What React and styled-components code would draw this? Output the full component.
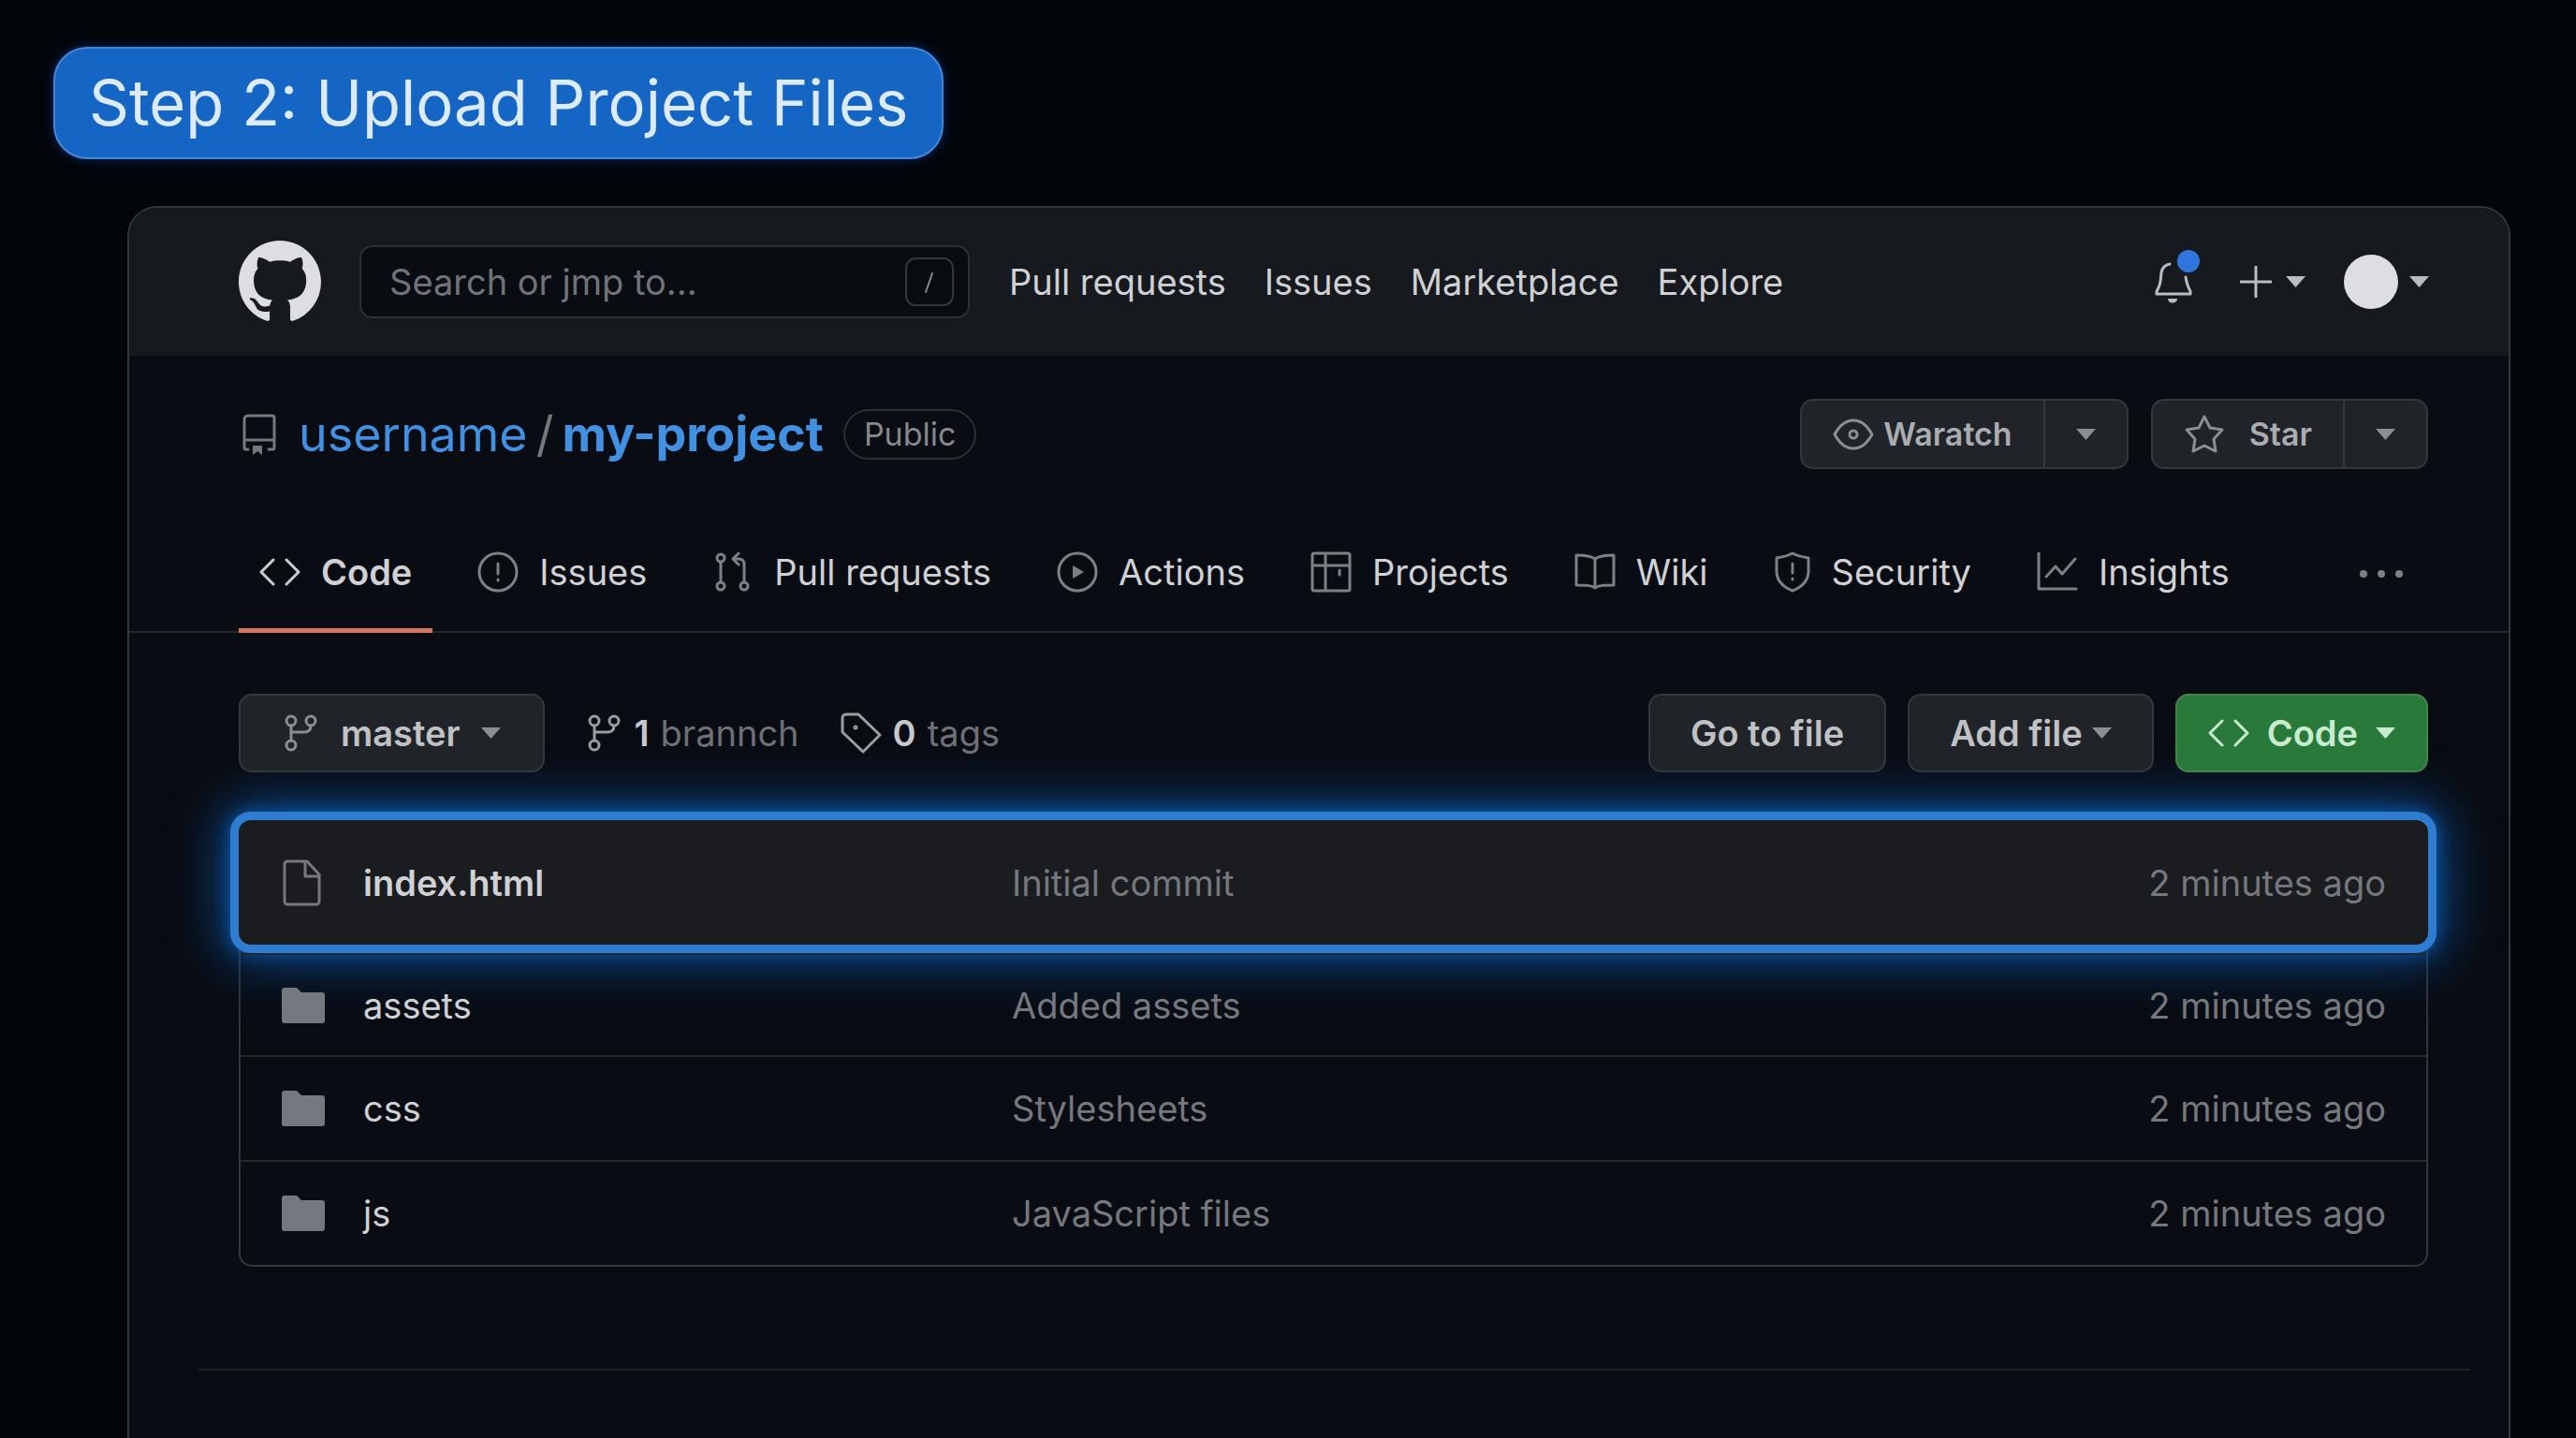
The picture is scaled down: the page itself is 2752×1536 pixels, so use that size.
import React from 'react'
import styled, { createGlobalStyle, css } from 'styled-components'

const GlobalStyle = createGlobalStyle`
  :root {
    --color-text: #cfd1d4;
    --color-muted: #75787d;
    --color-icon: #7d8085;
    --color-line: #24272b;
    --color-border: #33363a;
    --color-link: #4190e2;
  }

  * {
    box-sizing: border-box;
  }

  body {
    margin: 0;
    background-color: #02050a;
    color: var(--color-text);
    font-family: Inter, 'Liberation Sans', sans-serif;
    font-size: 38px;
    line-height: 48px;
  }

  button,
  input {
    font: inherit;
    color: inherit;
  }

  a {
    color: inherit;
    text-decoration: none;
  }
`

const Page = styled.main`
  display: flex;
  flex-direction: column;
  align-items: flex-start;
  min-height: 100vh;
  padding: 50px 70px 0 57px;
  gap: 50px;
`

const StepBadge = styled.h1`
  margin: 0;
  padding: 20px 36px;
  border: 2px solid #4586d6;
  border-radius: 36px;
  background-color: #1565c4;
  box-shadow: 0 0 12px #052a66;
  color: #dcebfb;
  font-size: 67px;
  font-weight: 400;
  line-height: 76px;
`

const Window = styled.section`
  display: flex;
  flex-direction: column;
  flex: 1;
  align-self: stretch;
  margin-left: 79px;
  border: 2px solid var(--color-border);
  border-bottom: 0;
  border-radius: 32px 32px 0 0;
  background-color: #090c12;
  overflow: hidden;
`

const Header = styled.header`
  display: flex;
  align-items: center;
  height: 158px;
  padding: 0 85px 0 117px;
  background-color: #16191e;
`

const LogoLink = styled.a`
  display: flex;
  color: #dcdee1;
`

const SearchBox = styled.label`
  display: flex;
  align-items: center;
  width: 652px;
  height: 78px;
  margin-left: 41px;
  padding: 0 15px 0 30px;
  border: 2px solid #2d3034;
  border-radius: 14px;
  background-color: #090c11;
`

const SearchInput = styled.input`
  flex: 1;
  min-width: 0;
  padding: 0;
  border: 0;
  outline: 0;
  background: none;

  &::placeholder {
    color: #707378;
    opacity: 1;
  }
`

const HeaderNav = styled.nav`
  display: flex;
  flex: 1;
  gap: 41px;
  margin-left: 42px;
`

const HeaderActions = styled.div`
  display: flex;
  align-items: center;
  gap: 41px;
`

const IconButton = styled.button`
  display: flex;
  align-items: center;
  gap: ${props => props.$gap || 12}px;
  padding: 0;
  border: 0;
  background: none;
  color: #b9bcc0;
`

const Avatar = styled.span`
  width: 58px;
  height: 58px;
  border-radius: 50%;
  background-color: #dcdee2;
`

const RepoBar = styled.div`
  display: flex;
  align-items: center;
  justify-content: space-between;
  padding: 46px 86px 0 121px;
`

const RepoTitle = styled.h2`
  display: flex;
  align-items: center;
  gap: 9px;
  margin: 0;
  color: var(--color-muted);
  font-size: 52px;
  font-weight: 400;
  line-height: 64px;

  svg {
    margin-right: 15px;
  }
`

const RepoLink = styled.a`
  color: var(--color-link);
  font-weight: ${props => (props.$strong ? 700 : 400)};
`

const Visibility = styled.span`
  margin-left: 12px;
  padding: 0 20px;
  border: 2px solid #2c2f33;
  border-radius: 27px;
  color: #85888c;
  font-size: 34px;
  line-height: 50px;
`

const Group = styled.div`
  display: flex;
  align-items: center;
  gap: ${props => props.$gap}px;
`

const surface = css`
  border: 2px solid #34373b;
  background-color: #202328;
`

const SplitButton = styled.div`
  ${surface}
  display: flex;
  height: 75px;
  border-radius: 14px;
  overflow: hidden;
`

const SplitPart = styled.button`
  display: flex;
  align-items: center;
  justify-content: center;
  gap: ${props => props.$gap || 0}px;
  padding: 0 33px;
  border: 0;
  background: none;
  color: #a9acb0;
  font-size: 34px;
  font-weight: 600;

  & + & {
    border-left: 2px solid #34373b;
  }

  svg {
    color: #8b8e92;
  }
`

const Tabs = styled.nav`
  display: flex;
  align-items: stretch;
  justify-content: space-between;
  height: 125px;
  margin-top: 50px;
  padding: 0 112px 0 117px;
  border-bottom: 2px solid var(--color-line);
`

const TabList = styled.div`
  display: flex;
  gap: 26px;
`

const Tab = styled.a`
  display: flex;
  align-items: center;
  gap: 22px;
  margin-bottom: -2px;
  padding: 0 22px;
  border-bottom: 5px solid ${props => (props.$active ? '#d8735d' : 'transparent')};
  font-weight: ${props => (props.$active ? 600 : 400)};

  svg {
    color: ${props => (props.$active ? '#c9ccd0' : 'var(--color-icon)')};
  }
`

const Content = styled.div`
  padding: 65px 86px 0 117px;
`

const Toolbar = styled.div`
  display: flex;
  align-items: center;
  justify-content: space-between;
  margin-bottom: 42px;
`

const Button = styled.button`
  ${surface}
  display: flex;
  align-items: center;
  gap: ${props => props.$gap || 12}px;
  height: 84px;
  padding: 0 ${props => props.$pad || 43}px;
  border-radius: 14px;
  color: #bfc1c5;
  font-weight: 600;

  svg {
    color: #8b8e92;
  }

  ${props =>
    props.$primary &&
    css`
      border-color: #43834f;
      background-color: #28793a;

      &,
      svg {
        color: #c9ecd1;
      }
    `}
`

const CountLink = styled.a`
  display: flex;
  align-items: center;
  gap: 12px;
  color: #6d7075;

  strong {
    color: #c6c8cc;
    font-weight: 600;
  }

  svg {
    color: #9a9da1;
  }
`

// rows are grids, so the highlighted one can stick out of the table frame
const FileTable = styled.table`
  display: block;
  border: 2px solid var(--color-border);
  border-top: 0;
  border-radius: 14px;

  tbody {
    display: block;
  }
`

const FileRow = styled.tr`
  display: grid;
  grid-template-columns: 87px 693px 1fr auto;
  align-items: center;
  height: 112px;
  padding: 0 43px 0 44px;

  & + & {
    border-top: 2px solid var(--color-line);
  }

  ${props =>
    props.$highlighted &&
    css`
      height: 151px;
      margin: 0 -11px;
      padding: 0 45px 0 46px;
      border: 9px solid #2f7dd1;
      border-radius: 22px;
      background-color: #1a1c20;
      box-shadow: 0 0 18px #0c57ad, 0 0 56px 10px #0b4484;

      & + tr {
        border-top: 0;
        height: 109px;
      }
    `}
`

const Cell = styled.td`
  display: flex;
  padding: 0;
  color: var(--color-muted);
`

const FileName = styled.a`
  color: var(--color-text);
  font-weight: ${props => (props.$strong ? 600 : 400)};
`

const Divider = styled.hr`
  width: auto;
  height: 2px;
  margin: 109px 41px 0 74px;
  border: 0;
  background-color: #1b1e22;
`

const Icon = ({ w = 44, h = 44, stroke = 3, children }) => (
  <svg
    width={w}
    height={h}
    viewBox={`0 0 ${w} ${h}`}
    fill="none"
    stroke="currentColor"
    strokeWidth={stroke}
    strokeLinecap="round"
    strokeLinejoin="round"
    aria-hidden="true"
  >
    {children}
  </svg>
)

const Logo = () => (
  <svg width="88" height="88" viewBox="0 0 16 16" fill="currentColor" aria-hidden="true">
    <path d="M8 0C3.58 0 0 3.58 0 8c0 3.54 2.29 6.53 5.47 7.59.4.07.55-.17.55-.38 0-.19-.01-.82-.01-1.49-2.01.37-2.53-.49-2.69-.94-.09-.23-.48-.94-.82-1.13-.28-.15-.68-.52-.01-.53.63-.01 1.08.58 1.23.82.72 1.21 1.87.87 2.33.66.07-.52.28-.87.51-1.07-1.78-.2-3.64-.89-3.64-3.95 0-.87.31-1.59.82-2.15-.08-.2-.36-1.02.08-2.12 0 0 .67-.21 2.2.82.64-.18 1.32-.27 2-.27.68 0 1.36.09 2 .27 1.53-1.04 2.2-.82 2.2-.82.44 1.1.16 1.92.08 2.12.51.56.82 1.27.82 2.15 0 3.07-1.87 3.75-3.65 3.95.29.25.54.73.54 1.48 0 1.07-.01 1.93-.01 2.2 0 .21.15.46.55.38A8.013 8.013 0 0016 8c0-4.42-3.58-8-8-8z" />
  </svg>
)

const Caret = () => (
  <Icon w={21} h={12} stroke={0}>
    <path d="M0 0h21L10.5 12z" fill="currentColor" />
  </Icon>
)

const SlashKey = () => (
  <Icon w={52} h={52} stroke={2}>
    <rect x="1" y="1" width="50" height="50" rx="10" stroke="#34373b" />
    <path d="M29 17L22 37" stroke="#85888c" />
  </Icon>
)

const BellIcon = () => (
  <Icon w={58} h={72}>
    <path d="M24 17c-5 1-8 4-9 9-1 8 0 13-5 20v3h36v-3c-3-5-4-9-5-15" />
    <path d="M22 54h10c0 6-10 6-10 0z" fill="currentColor" stroke="none" />
    <circle cx="44" cy="14" r="12" fill="#2f76dc" stroke="none" />
  </Icon>
)

const PlusIcon = () => (
  <Icon w={34} h={34}>
    <path d="M17 1v32M1 17h32" />
  </Icon>
)

const RepoIcon = () => (
  <Icon w={36} h={44}>
    <path d="M6 38H4a2 2 0 0 1-2-2V6a4 4 0 0 1 4-4h26a2 2 0 0 1 2 2v32a2 2 0 0 1-2 2h-4M2 28h32" />
    <path d="M11 34h10v10l-5-4-5 4z" fill="currentColor" stroke="none" />
  </Icon>
)

const EyeIcon = () => (
  <Icon>
    <path d="M2 22C8 11 15 7 22 7s14 4 20 15c-6 11-13 15-20 15S8 33 2 22z" />
    <circle cx="22" cy="22" r="4" />
  </Icon>
)

const StarIcon = () => (
  <Icon>
    <path d="M22 3l6 12 13 2-9 10 2 13-12-6-12 6 2-13-9-10 13-2z" />
  </Icon>
)

const CodeIcon = () => (
  <Icon>
    <path d="M15 9L2 22l13 13M29 9l13 13-13 13" />
  </Icon>
)

const IssueIcon = () => (
  <Icon>
    <circle cx="22" cy="22" r="20" />
    <path d="M22 13v11M22 30v1" />
  </Icon>
)

const PullIcon = () => (
  <Icon>
    <circle cx="9" cy="7" r="4" />
    <circle cx="9" cy="37" r="4" />
    <circle cx="34" cy="37" r="4" />
    <path d="M9 11v22M34 33V14c0-4-2-6-6-6h-5M28 2l-6 6 6 6" />
  </Icon>
)

const PlayIcon = () => (
  <Icon>
    <circle cx="22" cy="22" r="20" />
    <path d="M17 15l12 7-12 7z" fill="currentColor" stroke="none" />
  </Icon>
)

const ProjectIcon = () => (
  <Icon>
    <rect x="2" y="2" width="40" height="40" rx="2" />
    <path d="M16 2v40M2 15h40M31 20v5" />
  </Icon>
)

const BookIcon = () => (
  <Icon>
    <path d="M22 8c-4-3-10-4-20-4v32c10 0 16 0 20 3 4-3 10-3 20-3V4c-10 0-16 1-20 4zM22 8v31" />
  </Icon>
)

const ShieldIcon = () => (
  <Icon w={40}>
    <path d="M20 2c5 3 11 4 17 5v14c0 10-7 17-17 21C10 38 3 31 3 21V7c6-1 12-2 17-5z" />
    <path d="M20 13v10M20 29v1" />
  </Icon>
)

const GraphIcon = () => (
  <Icon>
    <path d="M2 2v38h40M10 27l10-11 7 8L41 8" />
  </Icon>
)

const BranchIcon = () => (
  <Icon w={40}>
    <circle cx="9" cy="9" r="5" />
    <circle cx="30" cy="9" r="5" />
    <circle cx="9" cy="35" r="5" />
    <path d="M9 14v16M30 14c0 5-3 7-7 7H9" />
  </Icon>
)

const TagIcon = () => (
  <Icon>
    <path d="M2 6a4 4 0 0 1 4-4h13l23 22-18 18L2 21z" />
    <circle cx="16" cy="16" r="1" />
  </Icon>
)

const FileIcon = () => (
  <Icon w={42} h={50}>
    <path d="M6 2h21l13 14v29a3 3 0 0 1-3 3H6a3 3 0 0 1-3-3V5a3 3 0 0 1 3-3zM25 2v16h15" />
  </Icon>
)

const FolderIcon = () => (
  <Icon w={46} h={38} stroke={0}>
    <path
      d="M3 0h13l5 5h22a3 3 0 0 1 3 3v27a3 3 0 0 1-3 3H3a3 3 0 0 1-3-3V3a3 3 0 0 1 3-3z"
      fill="#737881"
    />
  </Icon>
)

const DotsIcon = () => (
  <Icon w={48} h={10} stroke={0}>
    <g fill="#7d8085">
      <circle cx="5" cy="5" r="4" />
      <circle cx="24" cy="5" r="4" />
      <circle cx="43" cy="5" r="4" />
    </g>
  </Icon>
)

const navLinks = ['Pull requests', 'Issues', 'Marketplace', 'Explore']

const tabs = [
  { name: 'Code', icon: CodeIcon, active: true },
  { name: 'Issues', icon: IssueIcon },
  { name: 'Pull requests', icon: PullIcon },
  { name: 'Actions', icon: PlayIcon },
  { name: 'Projects', icon: ProjectIcon },
  { name: 'Wiki', icon: BookIcon },
  { name: 'Security', icon: ShieldIcon },
  { name: 'Insights', icon: GraphIcon },
]

const files = [
  { name: 'index.html', message: 'Initial commit', icon: FileIcon, highlighted: true },
  { name: 'assets', message: 'Added assets', icon: FolderIcon },
  { name: 'css', message: 'Stylesheets', icon: FolderIcon },
  { name: 'js', message: 'JavaScript files', icon: FolderIcon },
]

export default () => {
  return (
    <>
      <GlobalStyle />
      <Page>
        <StepBadge>Step 2: Upload Project Files</StepBadge>

        <Window>
          <Header>
            <LogoLink href="#" aria-label="Homepage">
              <Logo />
            </LogoLink>
            <SearchBox>
              <SearchInput type="text" placeholder="Search or jmp to..." aria-label="Search" />
              <SlashKey />
            </SearchBox>
            <HeaderNav>
              {navLinks.map(link => (
                <a href="#" key={link}>
                  {link}
                </a>
              ))}
            </HeaderNav>
            <HeaderActions>
              <IconButton aria-label="Notifications">
                <BellIcon />
              </IconButton>
              <IconButton aria-label="Create new" $gap={15}>
                <PlusIcon />
                <Caret />
              </IconButton>
              <IconButton aria-label="Account">
                <Avatar />
                <Caret />
              </IconButton>
            </HeaderActions>
          </Header>

          <RepoBar>
            <RepoTitle>
              <RepoIcon />
              <RepoLink href="#">username</RepoLink>
              <span>/</span>
              <RepoLink href="#" $strong>
                my-project
              </RepoLink>
              <Visibility>Public</Visibility>
            </RepoTitle>
            <Group $gap={24}>
              <SplitButton>
                <SplitPart $gap={10}>
                  <EyeIcon />
                  Waratch
                </SplitPart>
                <SplitPart aria-label="Watch options">
                  <Caret />
                </SplitPart>
              </SplitButton>
              <SplitButton>
                <SplitPart $gap={26}>
                  <StarIcon />
                  Star
                </SplitPart>
                <SplitPart aria-label="Star options">
                  <Caret />
                </SplitPart>
              </SplitButton>
            </Group>
          </RepoBar>

          <Tabs>
            <TabList>
              {tabs.map(({ name, icon: TabIcon, active }) => (
                <Tab href="#" key={name} $active={active}>
                  <TabIcon />
                  {name}
                </Tab>
              ))}
            </TabList>
            <IconButton aria-label="More">
              <DotsIcon />
            </IconButton>
          </Tabs>

          <Content>
            <Toolbar>
              <Group $gap={44}>
                <Button $gap={22} $pad={45}>
                  <BranchIcon />
                  master
                  <Caret />
                </Button>
                <CountLink href="#">
                  <BranchIcon />
                  <strong>1</strong> brannch
                </CountLink>
                <CountLink href="#">
                  <TagIcon />
                  <strong>0</strong> tags
                </CountLink>
              </Group>
              <Group $gap={23}>
                <Button>Go to file</Button>
                <Button $gap={10}>
                  Add file
                  <Caret />
                </Button>
                <Button $primary $gap={19} $pad={33}>
                  <CodeIcon />
                  Code
                  <Caret />
                </Button>
              </Group>
            </Toolbar>

            <FileTable>
              <tbody>
                {files.map(({ name, message, icon: RowIcon, highlighted }) => (
                  <FileRow key={name} $highlighted={highlighted}>
                    <Cell>
                      <RowIcon />
                    </Cell>
                    <Cell>
                      <FileName href="#" $strong={highlighted}>
                        {name}
                      </FileName>
                    </Cell>
                    <Cell>{message}</Cell>
                    <Cell>2 minutes ago</Cell>
                  </FileRow>
                ))}
              </tbody>
            </FileTable>
          </Content>

          <Divider />
        </Window>
      </Page>
    </>
  )
}
